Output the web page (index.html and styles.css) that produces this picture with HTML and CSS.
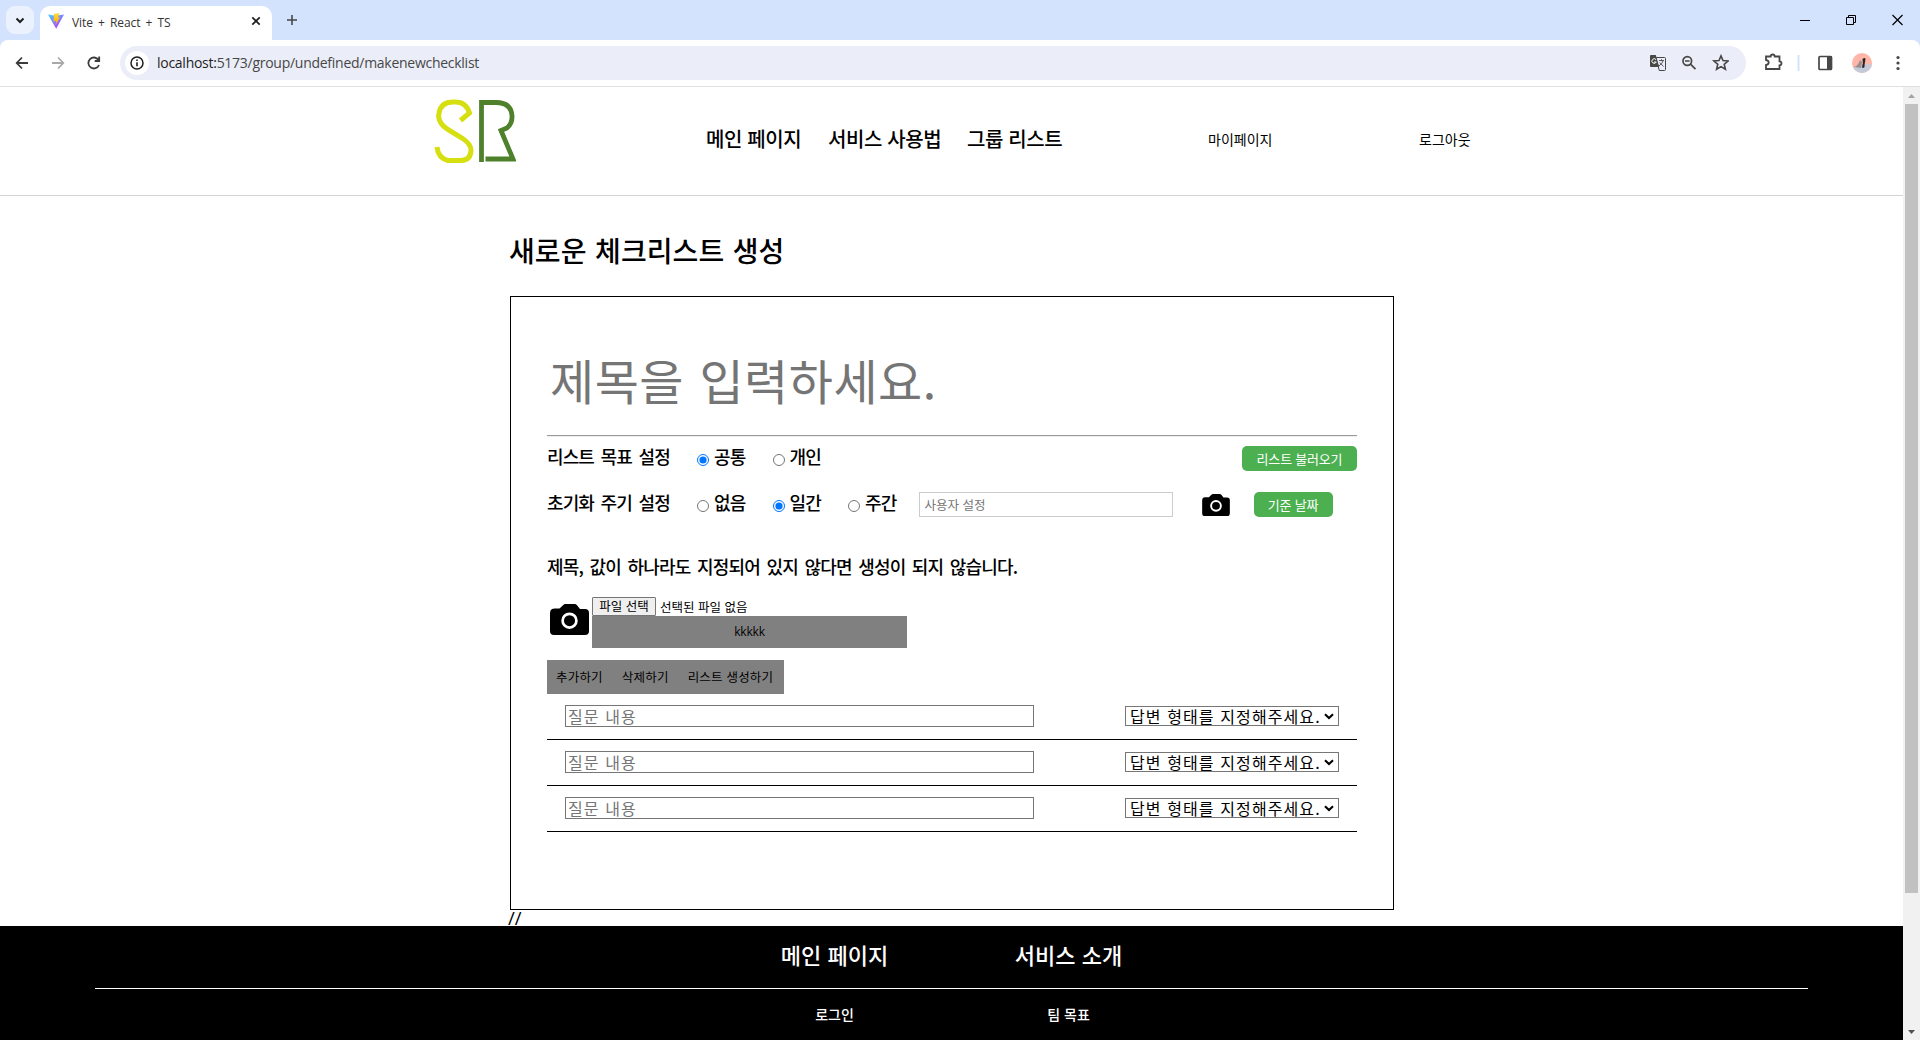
FILE: index.html
```html
<!DOCTYPE html>
<html lang="ko">
<head>
<meta charset="utf-8">
<title>Vite + React + TS</title>
<link rel="stylesheet" href="styles.css">
</head>
<body>
<svg class="defs" width="0" height="0">
  <symbol id="camera" viewBox="0 0 39 31"><path fill="#000" d="M4.500 4.500h5L13 1.200Q14 0 15.500 0h9Q26 0 27 1.200L30 5h5q4 0 4 4v18q0 4-4 4H4q-4 0-4-4V9q0-3 2-4z"/><circle cx="19.500" cy="16.700" r="6.900" fill="#000" stroke="#fff" stroke-width="2.700"/></symbol>
  <symbol id="chevron" viewBox="0 0 10 7"><path d="M1 1.200l4 3.800 4-3.800" fill="none" stroke="#000" stroke-width="2.100"/></symbol>
</svg>
<div class="tabstrip">
  <div class="tabsearch"><svg width="28" height="28" viewBox="0 0 28 28"><path d="M10.500 12.500l3.500 3.500 3.500-3.500" fill="none" stroke="#1f1f1f" stroke-width="2"/></svg></div>
  <div class="tab">
    <svg class="vite" width="16" height="16" viewBox="0 0 16 16"><defs><linearGradient id="vg" x1="0" y1="0" x2="0.700" y2="1"><stop offset="0" stop-color="#41d1ff"/><stop offset="1" stop-color="#bd34fe"/></linearGradient><linearGradient id="vy" x1="0" y1="0" x2="0" y2="1"><stop offset="0" stop-color="#ffdd35"/><stop offset="1" stop-color="#ffa800"/></linearGradient></defs><path d="M0 1.500L7 2.700 16 1.500 8.200 15.800z" fill="url(#vg)"/><path d="M6 1l5.500-1-1.500 4.500 2-.2L7.500 12l.7-4.200-2.700.6z" fill="url(#vy)"/></svg>
    <span class="tabtitle">Vite + React + TS</span>
    <svg class="tabclose" width="10" height="10" viewBox="0 0 10 10"><path d="M1.300 1.300l7.400 7.400M8.700 1.300L1.300 8.700" stroke="#1f1f1f" stroke-width="1.700"/></svg>
  </div>
  <svg class="plus" width="12" height="12" viewBox="0 0 12 12"><path d="M6 1v10M1 6h10" stroke="#474747" stroke-width="1.600"/></svg>
  <div class="winbtns">
    <svg width="11" height="12" viewBox="0 0 11 12"><path d="M0 6.500h10" stroke="#000"/></svg>
    <svg width="11" height="12" viewBox="0 0 11 12"><path d="M.5 3.500h7v7h-7zM2.500 3.500v-2h7v7h-2" fill="none" stroke="#000"/></svg>
    <svg width="11" height="12" viewBox="0 0 11 12"><path d="M.5 1l10 10M10.500 1l-10 10" stroke="#000" stroke-width="1.200"/></svg>
  </div>
</div>
<div class="toolbar">
  <svg class="nav" width="120" height="24" viewBox="0 0 120 24" fill="none" stroke-width="1.800"><path d="M28 12H17M22 6.500L16.700 12l5.300 5.500" stroke="#3c3c3c"/><path d="M52 12h11M58 6.500l5.300 5.500-5.300 5.500" stroke="#a9a9a9"/><path d="M98.500 9A5.500 5.500 0 1 0 99 14M99.200 5.500V10h-4.500" stroke="#3c3c3c"/></svg>
  <div class="omnibox">
    <div class="info"><svg width="14" height="14" viewBox="0 0 14 14"><circle cx="7" cy="7" r="6" fill="none" stroke="#1f1f1f" stroke-width="1.500"/><path d="M7 6.200v4M7 3.500v1.600" stroke="#1f1f1f" stroke-width="1.600"/></svg></div>
    <span class="url"><b>localhost:</b>5173/group/undefined/makenewchecklist</span>
    <svg class="omniicons" width="80" height="18" viewBox="0 0 80 18"><path d="M7.500 3.500h8q1 0 1 1v11q0 1-1 1h-5.200L6.800 3.500z" fill="#ebeef8" stroke="#474747"/><path d="M1 2q0-1 1-1h4.800l3.400 12H2q-1 0-1-1z" fill="#474747"/><path d="M7 5.600A2.300 2.300 0 1 0 7.300 8H5" fill="none" stroke="#fff"/><path d="M10 6.500h5M12.500 5.200v1.300M14 7q-.7 2.500-4 5M10.700 8.500l3.800 4" fill="none" stroke="#474747" stroke-width=".9"/><circle cx="38.300" cy="7" r="4.300" fill="none" stroke="#474747" stroke-width="1.700"/><path d="M41.500 10.200l5 5M36 7h4.600" stroke="#474747" stroke-width="1.700"/><path d="M72 1.900l2 4.700 5.100.4-3.900 3.300 1.200 5L72 12.600l-4.400 2.700 1.200-5L64.900 7l5.100-.4z" fill="none" stroke="#474747" stroke-width="1.600"/></svg>
  </div>
  <svg class="ext" width="156" height="24" viewBox="0 0 156 24"><path d="M2 6.500h4.700q0-2 2-2t2 2h4.800v4.800q2 0 2 2t-2 2v3.700H2v-4q2.700-.5 2.700-2.500T2 10z" transform="translate(0 -1)" fill="none" stroke="#474747" stroke-width="1.800"/><path d="M34.500 4v16" stroke="#d3e3fd" stroke-width="2"/><rect x="55" y="5.500" width="12.500" height="13" rx="1" fill="none" stroke="#474747" stroke-width="1.700"/><path d="M63 5h5v14h-5z" fill="#474747"/><clipPath id="av"><circle cx="98" cy="12" r="10"/></clipPath><g clip-path="url(#av)"><path d="M88 2h20v20H88z" fill="#ffb5a7"/><path d="M88 17l8-3 12-1v10H88z" fill="#c5cad8"/><path d="M90 16q4-1 6-7l2 2-1 6z" fill="#9a8d8d"/><path d="M98.500 8q2.500-2 3 0-1 5-1 8-2 2-2.500 0 1.500-4 .5-8z" fill="#292526"/></g><g fill="#474747"><circle cx="134" cy="6.500" r="1.600"/><circle cx="134" cy="12" r="1.600"/><circle cx="134" cy="17.500" r="1.600"/></g></svg>
</div>
<div class="viewport">
  <div class="page">
    <header class="header">
      <svg class="logo" width="82" height="64" viewBox="0 0 82 64" fill="none"><path d="M26.500 21.500l9-7.500Q32 3 21.500 3 7 2 5 14q-2 9 8 16l15 9q9 6 9 12 0 10-10 10.500H14Q4 59 3 48" stroke="#d6df10" stroke-width="5"/><path d="M47.500 63V3.500H62q15 0 16 13 .5 8-5 12.500l-6 2.500 12 28.500H51.500" stroke="#4f812c" stroke-width="4.800"/></svg>
      <nav class="mainnav"><span>메인 페이지</span><span>서비스 사용법</span><span>그룹 리스트</span></nav>
      <span class="mypage">마이페이지</span><span class="logout">로그아웃</span>
    </header>
    <main class="main">
      <h1 class="heading">새로운 체크리스트 생성</h1>
      <section class="card">
        <input class="title" placeholder="제목을 입력하세요.">
        <hr class="rule">
        <div class="row">
          <span class="label">리스트 목표 설정</span>
          <label class="opt"><input type="radio" name="goal" checked><span>공통</span></label>
          <label class="opt"><input type="radio" name="goal"><span>개인</span></label>
          <button class="green load">리스트 불러오기</button>
        </div>
        <div class="row second">
          <span class="label">초기화 주기 설정</span>
          <label class="opt"><input type="radio" name="cycle"><span>없음</span></label>
          <label class="opt"><input type="radio" name="cycle" checked><span>일간</span></label>
          <label class="opt"><input type="radio" name="cycle"><span>주간</span></label>
          <input class="custom" placeholder="사용자 설정">
          <svg class="cam" width="28" height="22"><use href="#camera"/></svg>
          <button class="green date">기준 날짜</button>
        </div>
        <p class="notice">제목, 값이 하나라도 지정되어 있지 않다면 생성이 되지 않습니다.</p>
        <div class="upload">
          <svg class="bigcam" width="39" height="31"><use href="#camera"/></svg>
          <div class="filecol">
            <div class="file"><span class="filebtn">파일 선택</span><span class="filename">선택된 파일 없음</span></div>
            <div class="kk">kkkkk</div>
          </div>
        </div>
        <div class="actions"><span>추가하기</span><span>삭제하기</span><span>리스트 생성하기</span></div>
        <div class="question"><input placeholder="질문 내용"><div class="select"><span>답변 형태를 지정해주세요.</span><svg width="10" height="7"><use href="#chevron"/></svg></div></div>
        <div class="question"><input placeholder="질문 내용"><div class="select"><span>답변 형태를 지정해주세요.</span><svg width="10" height="7"><use href="#chevron"/></svg></div></div>
        <div class="question"><input placeholder="질문 내용"><div class="select"><span>답변 형태를 지정해주세요.</span><svg width="10" height="7"><use href="#chevron"/></svg></div></div>
      </section>
      <div class="slashes">//</div>
    </main>
    <footer class="footer">
      <div class="ftop"><span>메인 페이지</span><span>서비스 소개</span></div>
      <div class="fbottom"><span>로그인</span><span>팀 목표</span></div>
    </footer>
  </div>
  <div class="scrollbar">
    <svg width="17" height="17" viewBox="0 0 17 17"><path d="M5 11h7L8.500 7z" fill="#a3a3a3"/></svg>
    <div class="thumb"></div>
    <svg class="down" width="17" height="17" viewBox="0 0 17 17"><path d="M5 7h7l-3.500 4z" fill="#505050"/></svg>
  </div>
</div>
</body>
</html>
```
FILE: styles.css
```css
* { box-sizing: border-box; }
body { margin: 0; width: 1920px; height: 1040px; overflow: hidden; display: flex; flex-direction: column; background: #d3e3fd; color: #000; font-family: "Noto Sans CJK KR", sans-serif; }
input, button { font-family: inherit; }
span, p, h1 { white-space: nowrap; }
.defs { display: block; width: 0; height: 0; flex: none; }
svg { display: block; flex: none; }

.tabstrip { height: 40px; flex: none; display: flex; align-items: flex-start; }
.tabsearch { width: 28px; height: 28px; margin: 6px 6px 0; border-radius: 9px; background: #ebf2fe; }
.tab { width: 232px; height: 34px; margin-top: 6px; padding: 0 11px 0 8px; background: #fff; border-radius: 10px 10px 0 0; display: flex; align-items: center; }
.vite { margin-top: -4px; }
.tabtitle { margin: -1px auto 0 8px; font: 12px/16px "Open Sans", sans-serif; color: #333; letter-spacing: -.1px; word-spacing: 2.200px; }
.tabclose { margin-top: -5px; }
.plus { margin: 14px 0 0 14px; }
.winbtns { margin: 14px 17px 0 auto; display: flex; gap: 35px; }

.toolbar { height: 47px; flex: none; display: flex; background: #fff; border-bottom: 1px solid #dfdfdf; border-radius: 8px 8px 0 0; }
.nav { margin-top: 11px; }
.omnibox { width: 1626px; flex: none; height: 34px; margin-top: 6px; border-radius: 17px; background: #ebeef8; display: flex; align-items: center; }
.info { width: 24px; height: 24px; margin-left: 5px; border-radius: 12px; background: #fff; display: flex; align-items: center; justify-content: center; }
.url { margin-left: 8px; font: 14px/20px "Open Sans", sans-serif; color: #474747; letter-spacing: -.270px; }
.url b { color: #1f1f1f; font-weight: 400; }
.omniicons { margin: 0 17px 0 auto; }
.ext { margin: 11px 0 0 18px; }

.viewport { flex: 1; min-height: 0; display: flex; background: #fff; }
.page { width: 1903px; display: flex; flex-direction: column; }
.header { height: 109px; flex: none; border-bottom: 1px solid #d3d3d3; padding-left: 434px; display: flex; }
.logo { margin-top: 12px; }
.mainnav { margin-left: 190px; display: flex; width: 502px; }
.mainnav span { font-size: 20px; line-height: 104px; font-weight: 500; letter-spacing: -.4px; }
.mainnav span:nth-child(1) { width: 122px; }
.mainnav span:nth-child(2) { width: 139px; }
.mypage, .logout { font-size: 14px; line-height: 105px; font-weight: 400; }
.mypage { width: 211px; }

.main { margin-left: 510px; width: 884px; }
.heading { margin: 34px 0 0 -1px; font-size: 28px; line-height: 40px; height: 66px; font-weight: 500; letter-spacing: .1px; word-spacing: .5px; }
.card { height: 614px; border: 1px solid #000; padding: 34px 36px 0; display: flex; flex-direction: column; }
.title { height: 95px; flex: none; border: 0; padding: 0 3px; font-size: 48px; letter-spacing: .5px; word-spacing: 1.500px; font-weight: 400; }
::placeholder { color: #757575; opacity: 1; }
.rule { margin: 9px 0 0; width: 810px; height: 2px; border: 0; border-top: 1px solid #9a9a9a; border-bottom: 1px solid #eee; }
.row { display: flex; height: 46px; padding-top: 10px; margin-top: -1px; flex: none; align-items: flex-start; font-size: 18px; line-height: 25px; font-weight: 500; letter-spacing: -.9px; word-spacing: 2.500px; }
.second { margin-top: 0; }
.row span { margin-top: -2px; }
.label { width: 150px; }
.opt { display: flex; width: 75.5px; }
.opt input { width: 12px; height: 12px; margin: 8px 5px 0 0; }
.green { height: 25px; border: 0; border-radius: 5px; background: #4caf50; color: #fff; padding: 0; text-align: center; font-size: 13px; line-height: 24px; letter-spacing: -.2px; }
.load { width: 115px; margin-left: auto; }
.date { width: 79px; margin-left: 24px; }
.custom { width: 254px; height: 25px; border: 1px solid #ccc; padding: 0 5px 1px; font-size: 12.500px; margin-left: -5px; }
.cam { margin: 2px 0 0 29px; }
.notice { margin: 21px 0 0; height: 48px; flex: none; line-height: 34px; font-size: 18px; font-weight: 500; letter-spacing: -.8px; word-spacing: 2.200px; }
.upload { height: 63px; display: flex; flex: none; }
.bigcam { margin: 7px 3px 0; }
.filecol { width: 315px; }
.file { height: 19px; display: flex; font-size: 12.500px; line-height: 17px; }
.filebtn { width: 64px; height: 19px; border: 1px solid #767676; background: #efefef; text-align: center; line-height: 16px; border-radius: 1px; }
.filename { margin-left: 4px; line-height: 20px; }
.kk { height: 32px; background: gray; text-align: center; font: 12px/31px "Open Sans", sans-serif; letter-spacing: -.200px; }
.actions { width: 237px; height: 34px; flex: none; background: gray; font-size: 12.500px; line-height: 33px; padding-left: 9px; display: flex; gap: 19px; letter-spacing: .2px; }
.question { height: 46px; flex: none; border-bottom: 1px solid #000; display: flex; justify-content: space-between; align-items: center; padding: 0 18px 1px; }
.question input { width: 469px; height: 22px; border: 1px solid #767676; padding: 0 2px; font-size: 16px; letter-spacing: 1.100px; word-spacing: 0; }
.select { width: 214px; height: 20px; border: 1px solid #767676; background: #fff; font-size: 16px; line-height: 17px; letter-spacing: 1.100px; padding: 0 4px; display: flex; justify-content: space-between; align-items: center; }
.slashes { height: 16px; margin-left: -2px; font: 18.500px/15px "Open Sans", sans-serif; }

.footer { flex: 1; background: #000; color: #fff; padding: 0 95px; }
.ftop { height: 63px; border-bottom: 1px solid #fff; display: flex; justify-content: center; font-size: 22px; font-weight: 500; line-height: 56px; text-align: center; }
.fbottom { display: flex; justify-content: center; font-size: 14px; line-height: 50px; text-align: center; font-weight: 500; }
.footer span { width: 234px; }

.scrollbar { width: 17px; background: #f1f1f1; display: flex; flex-direction: column; align-items: center; }
.thumb { width: 13px; height: 789px; background: #c1c1c1; }
.down { margin-top: auto; }
```
